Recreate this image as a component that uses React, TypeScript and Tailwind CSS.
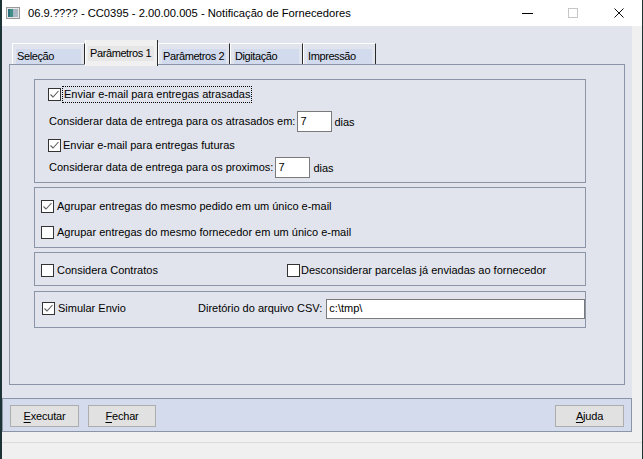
import React from "react";

const FONT = "font-['Liberation_Sans',Arial,sans-serif]";

function Check({ checked = false }: { checked?: boolean }) {
  return (
    <span className="flex h-[13px] w-[13px] shrink-0 items-center justify-center border border-[#333] bg-white">
      {checked && (
        <svg width="11" height="11" viewBox="0 0 11 11">
          <polyline points="1.5,5.5 4,8 9.5,2" fill="none" stroke="#5c5c5c" strokeWidth="1.1" />
        </svg>
      )}
    </span>
  );
}

function Tab({ label, w }: { label: string; w: string }) {
  return (
    <div className={`${w} h-[21px] shrink-0 border-l border-t border-white border-r border-r-[#2a2a2a] pl-[3px] pr-[3px] pt-[5px]`}>
      <div className="h-[15px] bg-[#d2dbed] pl-[1px] leading-[15px] tracking-[-0.4px]">{label}</div>
    </div>
  );
}

function Button({ first, rest, w }: { first: string; rest: string; w: string }) {
  return (
    <button
      type="button"
      className={`${w} flex h-[22px] items-center justify-center border border-[#adadad] bg-[#e1e1e1] text-[11px] tracking-[-0.2px] text-black`}
    >
      <span className="underline decoration-1 underline-offset-[2px]">{first}</span>
      {rest}
    </button>
  );
}

export default function App() {
  return (
    <div
      className={`${FONT} flex h-[459px] w-[643px] flex-col overflow-hidden whitespace-nowrap border-l-2 border-r border-[#1d3437] bg-[#f0f0f0] text-[11px] text-black`}
    >
      {/* title bar */}
      <div className="flex h-[26px] shrink-0 items-center bg-white">
        <svg className="ml-[4px]" width="14" height="12" viewBox="0 0 14 12">
          <rect x="0.5" y="0.5" width="13" height="11" fill="#e6e6e6" stroke="#9a9a9a" />
          <rect x="2" y="2" width="5" height="8" fill="#3f8f86" />
          <rect x="7" y="2" width="5" height="8" fill="#a9b8c4" />
          <rect x="2" y="2" width="2" height="8" fill="#2d6f7c" />
        </svg>
        <span className="ml-[8px] text-[11.2px]">06.9.???? - CC0395 - 2.00.00.005 - Notificação de Fornecedores</span>
        <div className="ml-auto flex h-full">
          <div className="flex h-full w-[46px] items-center justify-center">
            <div className="h-px w-[11px] bg-black" />
          </div>
          <div className="flex h-full w-[46px] items-center justify-center">
            <div className="h-[10px] w-[10px] border border-[#c6c6c6]" />
          </div>
          <div className="flex h-full w-[46px] items-center justify-center">
            <svg width="10" height="10" viewBox="0 0 10 10">
              <path d="M0.5 0.5 L9.5 9.5 M9.5 0.5 L0.5 9.5" stroke="#111" strokeWidth="1" />
            </svg>
          </div>
        </div>
      </div>

      {/* client */}
      <div className="flex h-[406px] shrink-0">
        <div className="flex w-[630px] flex-col bg-[#e1e4ec]">
          {/* tabs */}
          <div className="flex h-[38px] shrink-0 items-end pl-[10px]">
            <Tab label="Seleção" w="w-[73px]" />
            <div className="relative z-10 -mb-[2px] h-[26px] w-[73px] shrink-0 border-l border-white border-r border-r-[#2a2a2a] bg-[#f0f0f0] pl-[2px] pr-[3px] pt-[6px]">
              <div className="h-[15px] bg-[#e6e6e6] pl-[2px] leading-[15px] tracking-[-0.4px]">Parâmetros 1</div>
            </div>
            <Tab label="Parâmetros 2" w="w-[72px]" />
            <Tab label="Digitação" w="w-[73px]" />
            <Tab label="Impressão" w="w-[73px]" />
          </div>

          {/* panel */}
          <div className="mx-[7px] flex h-[321px] shrink-0 flex-col border border-[#8a96a8] pl-[24px] pt-[14px]">
            {/* group 1 */}
            <div className="flex h-[104px] w-[552px] flex-col border border-[#8a96a8]">
              <div className="mt-[4px] flex h-[21px] items-center pl-[13px]">
                <Check checked />
                <span className="ml-px border border-dotted border-black px-px leading-[15px]">
                  Enviar e-mail para entregas atrasadas
                </span>
              </div>
              <div className="mt-[6px] flex h-[21px] items-center pl-[14px]">
                <span>Considerar data de entrega para os atrasados em:</span>
                <div className="ml-[2px] flex h-[21px] w-[35px] items-center border border-[#7a7a7a] bg-white pl-[2px]">7</div>
                <span className="ml-[2px] mt-px">dias</span>
              </div>
              <div className="mt-[3px] flex h-[21px] items-center pl-[13px]">
                <Check checked />
                <span className="ml-[2px]">Enviar e-mail para entregas futuras</span>
              </div>
              <div className="mt-px flex h-[21px] items-center pl-[14px]">
                <span>Considerar data de entrega para os proximos:</span>
                <div className="ml-[2px] flex h-[21px] w-[35px] items-center border border-[#7a7a7a] bg-white pl-[2px]">7</div>
                <span className="ml-[3px] mt-[2px]">dias</span>
              </div>
            </div>

            {/* group 2 */}
            <div className="mt-[4px] flex h-[61px] w-[552px] flex-col gap-[6px] border border-[#8a96a8] pl-[6px] pt-[8px]">
              <div className="flex h-[20px] items-center">
                <Check checked />
                <span className="ml-[3px]">Agrupar entregas do mesmo pedido em um único e-mail</span>
              </div>
              <div className="flex h-[20px] items-center">
                <Check />
                <span className="ml-[3px]">Agrupar entregas do mesmo fornecedor em um único e-mail</span>
              </div>
            </div>

            {/* group 3 */}
            <div className="mt-[4px] flex h-[34px] w-[552px] border border-[#8a96a8] pl-[6px] pt-[7px]">
              <div className="flex h-[20px] w-[246px] shrink-0 items-center">
                <Check />
                <span className="ml-[3px]">Considera Contratos</span>
              </div>
              <div className="flex h-[20px] items-center">
                <Check />
                <span className="ml-px">Desconsiderar parcelas já enviadas ao fornecedor</span>
              </div>
            </div>

            {/* group 4 */}
            <div className="mt-[5px] flex h-[37px] w-[552px] border border-[#8a96a8] pl-[7px] pt-[6px]">
              <div className="flex h-[21px] w-[156px] shrink-0 items-center">
                <Check checked />
                <span className="ml-[3px]">Simular Envio</span>
              </div>
              <div className="flex h-[21px] items-center">
                <span>Diretório do arquivo CSV:</span>
                <div className="ml-[4px] flex h-[20px] w-[259px] shrink-0 items-center border border-[#7a7a7a] bg-white pl-[2px]">
                  c:\tmp\
                </div>
              </div>
            </div>
          </div>

          {/* button bar */}
          <div className="mt-[13px] flex h-[34px] shrink-0 items-start border border-[#8a96a8] bg-[#d3dbed] pl-[7px] pr-[7px] pt-[6px]">
            <Button first="E" rest="xecutar" w="w-[69px]" />
            <div className="ml-[9px]">
              <Button first="F" rest="echar" w="w-[68px]" />
            </div>
            <div className="ml-auto">
              <Button first="A" rest="juda" w="w-[69px]" />
            </div>
          </div>
        </div>
        <div className="flex-1 bg-[#f0f0f0]" />
      </div>

      {/* bottom */}
      <div className="mt-[10px] flex-1 border-t border-[#dadada]" />
    </div>
  );
}
